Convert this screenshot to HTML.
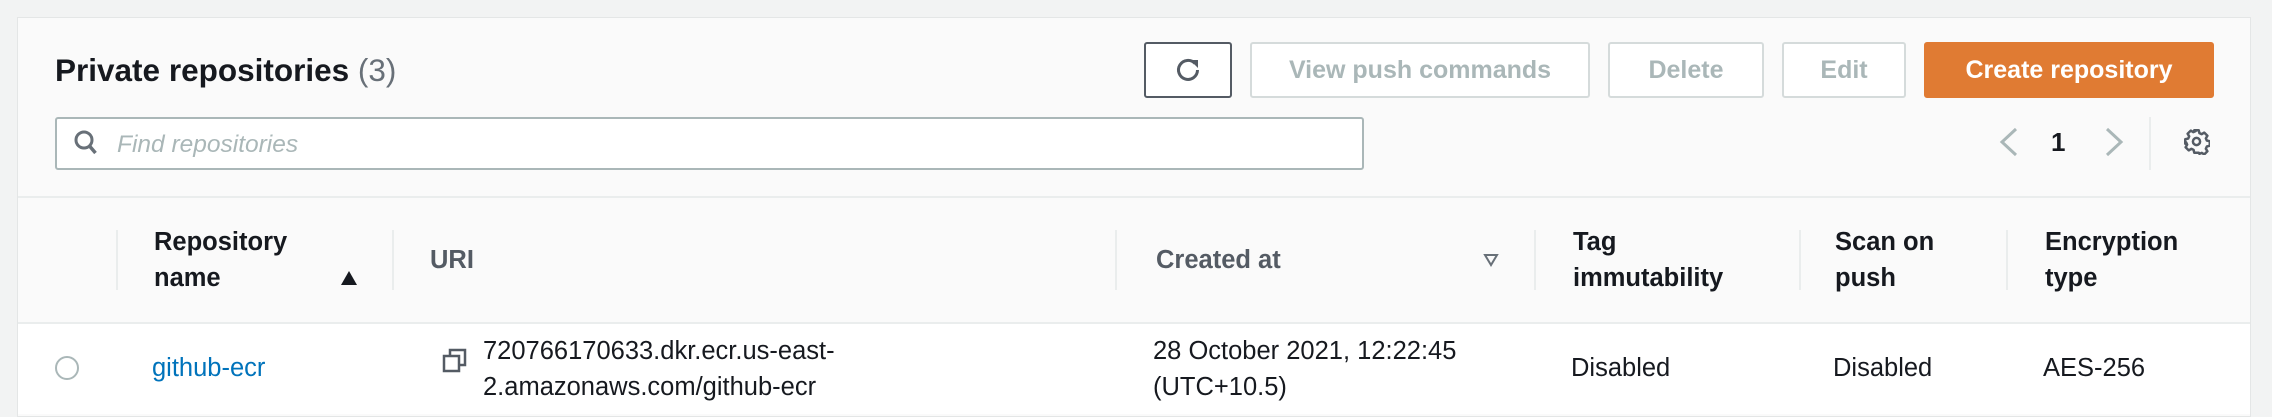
<!DOCTYPE html>
<html><head><meta charset="utf-8"><style>
*{box-sizing:border-box;margin:0;padding:0}
body{width:2272px;height:408px;background:#f2f3f3;font-family:"Liberation Sans",sans-serif;color:#16191f;position:relative;overflow:hidden}
.p{position:absolute;left:17px;top:17px;width:2234px;height:400px;background:#fafafa;border:1px solid #e4e6e6}
.a{position:absolute;white-space:nowrap}
.btn{position:absolute;top:42px;height:56px;border:2px solid #d5dbdb;border-radius:3px;background:#fff;color:#aab7b8;font-weight:bold;font-size:25px;display:flex;align-items:center;justify-content:center}
.h{font-weight:bold;font-size:25.5px;line-height:36px;color:#16191f}
.d{position:absolute;top:230px;width:2px;height:60px;background:#eaeded}
.t{font-size:25.5px;line-height:36px}
</style></head><body>
<div class="p"></div>
<div class="a" style="left:55px;top:52px;font-size:31.5px;font-weight:bold">Private repositories <span style="color:#687078;font-weight:normal">(3)</span></div>
<div class="btn" style="left:1144px;width:88px;border-color:#545b64">
<svg width="30" height="30" viewBox="0 0 30 30"><path d="M22 8.5A9.5 9.5 0 1 0 24.5 15" fill="none" stroke="#545b64" stroke-width="3"/><path d="M17 5h8v8z" fill="#545b64"/></svg></div>
<div class="btn" style="left:1250px;width:340px">View push commands</div>
<div class="btn" style="left:1608px;width:156px">Delete</div>
<div class="btn" style="left:1782px;width:124px">Edit</div>
<div class="btn" style="left:1924px;width:290px;background:#e07b33;border-color:#e07b33;color:#fff">Create repository</div>
<div class="a" style="left:55px;top:117px;width:1309px;height:53px;background:#fff;border:2px solid #aab7b8;border-radius:3px"></div>
<svg class="a" style="left:73px;top:128px" width="28" height="30" viewBox="0 0 28 30"><circle cx="11" cy="12" r="8" fill="none" stroke="#687078" stroke-width="3"/><path d="M16.5 18l6 7" stroke="#687078" stroke-width="3.5"/></svg>
<div class="a" style="left:117px;top:131px;font-size:24.5px;font-style:italic;color:#aab7b8">Find repositories</div>
<svg class="a" style="left:1996px;top:127px" width="24" height="30" viewBox="0 0 24 30"><path d="M20 2L6 15l14 13" fill="none" stroke="#aab7b8" stroke-width="3"/></svg>
<div class="a" style="left:2051px;top:127px;font-size:26px;font-weight:bold">1</div>
<svg class="a" style="left:2103px;top:127px" width="24" height="30" viewBox="0 0 24 30"><path d="M4 2l14 13L4 28" fill="none" stroke="#aab7b8" stroke-width="3"/></svg>
<div class="a" style="left:2149px;top:117px;width:2px;height:53px;background:#eaeded"></div>
<svg class="a" style="left:2183px;top:128px" width="27" height="27" viewBox="0 0 24 24"><path d="M10 2h4l.6 2.6 2 .9 2.3-1.4 2.8 2.8-1.4 2.3.9 2 2.6.6v4l-2.6.6-.9 2 1.4 2.3-2.8 2.8-2.3-1.4-2 .9L14 22h-4l-.6-2.6-2-.9-2.3 1.4-2.8-2.8 1.4-2.3-.9-2L2 14v-4l2.6-.6.9-2-1.4-2.3 2.8-2.8 2.3 1.4 2-.9z" fill="none" stroke="#545b64" stroke-width="2.2" stroke-linejoin="round"/><circle cx="12" cy="12" r="3.2" fill="none" stroke="#545b64" stroke-width="2.2"/></svg>
<div class="a" style="left:18px;top:196px;width:2232px;height:2px;background:#eaeded"></div>
<div class="a" style="left:18px;top:322px;width:2232px;height:2px;background:#eaeded"></div>
<div class="a" style="left:18px;top:324px;width:2232px;height:90px;background:#fff"></div>
<div class="d" style="left:116px"></div><div class="d" style="left:392px"></div><div class="d" style="left:1115px"></div><div class="d" style="left:1534px"></div><div class="d" style="left:1799px"></div><div class="d" style="left:2006px"></div>
<div class="a h" style="left:154px;top:224px">Repository<br>name</div>
<svg class="a" style="left:340px;top:270px" width="18" height="16"><path d="M9 1L17 15H1z" fill="#16191f"/></svg>
<div class="a h" style="left:430px;top:242px;color:#545b64">URI</div>
<div class="a h" style="left:1156px;top:242px;color:#545b64">Created at</div>
<svg class="a" style="left:1483px;top:253px" width="16" height="14"><path d="M2 2h12L8 12z" fill="none" stroke="#687078" stroke-width="2"/></svg>
<div class="a h" style="left:1573px;top:224px">Tag<br>immutability</div>
<div class="a h" style="left:1835px;top:224px">Scan on<br>push</div>
<div class="a h" style="left:2045px;top:224px">Encryption<br>type</div>
<div class="a" style="left:55px;top:356px;width:24px;height:24px;border:2px solid #aab7b8;border-radius:50%;background:#fff"></div>
<div class="a t" style="left:152px;top:350px;color:#0073bb">github-ecr</div>
<svg class="a" style="left:441px;top:347px" width="28" height="28" viewBox="0 0 28 28"><rect x="9" y="3" width="15" height="15" fill="none" stroke="#545b64" stroke-width="2.5"/><rect x="3" y="9" width="15" height="15" fill="#fff" stroke="#545b64" stroke-width="2.5"/></svg>
<div class="a t" style="left:483px;top:333px">720766170633.dkr.ecr.us-east-<br>2.amazonaws.com/github-ecr</div>
<div class="a t" style="left:1153px;top:333px">28 October 2021, 12:22:45<br>(UTC+10.5)</div>
<div class="a t" style="left:1571px;top:350px">Disabled</div>
<div class="a t" style="left:1833px;top:350px">Disabled</div>
<div class="a t" style="left:2043px;top:350px">AES-256</div>
</body></html>
